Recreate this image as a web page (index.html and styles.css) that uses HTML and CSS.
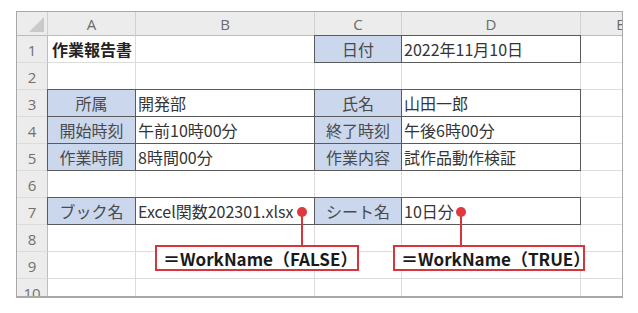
FILE: index.html
```html
<!DOCTYPE html>
<html lang="ja">
<head>
<meta charset="utf-8">
<link rel="stylesheet" href="styles.css">
</head>
<body>
<div class="stage">
  <div class="sheet">
    <div class="grid">
      <div class="hd corner"><span class="tri"></span></div>
      <div class="hd">A</div>
      <div class="hd">B</div>
      <div class="hd">C</div>
      <div class="hd">D</div>
      <div class="hd">E</div>

      <div class="rh">1</div>
      <div class="c title">作業報告書</div>
      <div class="c"></div>
      <div class="c lab dk">日付</div>
      <div class="c val dk">2022年11月10日</div>
      <div class="c"></div>

      <div class="rh">2</div>
      <div class="c"></div><div class="c"></div><div class="c"></div><div class="c"></div><div class="c"></div>

      <div class="rh">3</div>
      <div class="c lab dk">所属</div>
      <div class="c val dk">開発部</div>
      <div class="c lab dk">氏名</div>
      <div class="c val dk">山田一郎</div>
      <div class="c"></div>

      <div class="rh">4</div>
      <div class="c lab dk">開始時刻</div>
      <div class="c val dk">午前10時00分</div>
      <div class="c lab dk">終了時刻</div>
      <div class="c val dk">午後6時00分</div>
      <div class="c"></div>

      <div class="rh">5</div>
      <div class="c lab dk">作業時間</div>
      <div class="c val dk">8時間00分</div>
      <div class="c lab dk">作業内容</div>
      <div class="c val dk">試作品動作検証</div>
      <div class="c"></div>

      <div class="rh">6</div>
      <div class="c"></div><div class="c"></div><div class="c"></div><div class="c"></div><div class="c"></div>

      <div class="rh">7</div>
      <div class="c lab dk">ブック名</div>
      <div class="c val dk">Excel関数202301.xlsx</div>
      <div class="c lab dk">シート名</div>
      <div class="c val dk">10日分</div>
      <div class="c"></div>

      <div class="rh">8</div>
      <div class="c"></div><div class="c"></div><div class="c"></div><div class="c"></div><div class="c"></div>

      <div class="rh">9</div>
      <div class="c"></div><div class="c"></div><div class="c"></div><div class="c"></div><div class="c"></div>

      <div class="rh">10</div>
      <div class="c"></div><div class="c"></div><div class="c"></div><div class="c"></div><div class="c"></div>
    </div>
  </div>

  <div class="dot dot-left"></div>
  <div class="stem stem-left"></div>
  <div class="callout callout-left">＝WorkName（FALSE）</div>

  <div class="dot dot-right"></div>
  <div class="stem stem-right"></div>
  <div class="callout callout-right">＝WorkName（TRUE）</div>
</div>
</body>
</html>
```

FILE: styles.css
```css
html, body {
  margin: 0;
  padding: 0;
  background: #ffffff;
}

.stage {
  position: relative;
  width: 638px;
  height: 313px;
  padding: 11px 0 0 16px;
  box-sizing: border-box;
  font-family: "Noto Sans CJK JP", "Noto Sans", sans-serif;
}

.sheet {
  width: 607px;
  height: 287px;
  box-sizing: border-box;
  border: 1px solid #a8a8a8;
  border-bottom: 2px solid #a8a8a8;
  overflow: hidden;
  background: #ffffff;
}

.grid {
  display: grid;
  grid-template-columns: 31px 88px 179px 87px 179px 80px;
  grid-template-rows: 24px repeat(10, 27px);
}

.grid > div {
  box-sizing: border-box;
  border-right: 1px solid #dcdcdc;
  border-bottom: 1px solid #dcdcdc;
  display: flex;
  align-items: center;
  white-space: nowrap;
  overflow: visible;
}

.hd {
  background: #ececec;
  justify-content: center;
  color: #6b6b6b;
  font-family: "Open Sans", "Noto Sans", sans-serif;
  font-size: 15px;
  border-bottom-color: #bdbdbd !important;
  border-right-color: #d0d0d0 !important;
}

.corner {
  position: relative;
}

.tri {
  position: absolute;
  right: 3px;
  bottom: 3px;
  width: 0;
  height: 0;
  border-left: 15px solid transparent;
  border-bottom: 15px solid #c9c9c9;
}

.rh {
  background: #ececec;
  justify-content: center;
  color: #707070;
  font-family: "Open Sans", "Noto Sans", sans-serif;
  font-size: 15px;
  padding-top: 1px;
  border-right-color: #bdbdbd !important;
}

.c {
  font-size: 16px;
  color: #3a3a3a;
  padding-left: 2px;
}

.title {
  font-weight: 700;
  color: #222222;
  padding-left: 4px;
}

.lab {
  background: #cbd7ec;
  justify-content: center;
  padding-left: 0;
  color: #4a4a4a;
}

.val {
  color: #353535;
}

.dk {
  position: relative;
}

.dk::after {
  content: "";
  position: absolute;
  left: -1px;
  top: -1px;
  right: -1px;
  bottom: -1px;
  border: 1px solid #5a5a5a;
  pointer-events: none;
  z-index: 1;
}

.dot {
  position: absolute;
  width: 10px;
  height: 10px;
  border-radius: 50%;
  background: #e0383e;
  z-index: 3;
}

.dot-left { left: 297px; top: 207px; }
.dot-right { left: 456px; top: 207px; }

.stem {
  position: absolute;
  width: 2px;
  top: 212px;
  height: 34px;
  background: #d7343c;
  z-index: 2;
}

.stem-left { left: 301px; }
.stem-right { left: 460px; }

.callout {
  position: absolute;
  top: 245px;
  height: 26px;
  box-sizing: border-box;
  border: 2px solid #d7343c;
  background: #ffffff;
  display: flex;
  align-items: center;
  padding-left: 6px;
  font-family: "Noto Sans CJK JP", "Noto Sans", sans-serif;
  font-weight: 700;
  font-size: 17px;
  color: #1a1a1a;
  white-space: nowrap;
  z-index: 3;
}

.callout-left { left: 155px; width: 204px; }
.callout-right { left: 393px; width: 192px; }
```
